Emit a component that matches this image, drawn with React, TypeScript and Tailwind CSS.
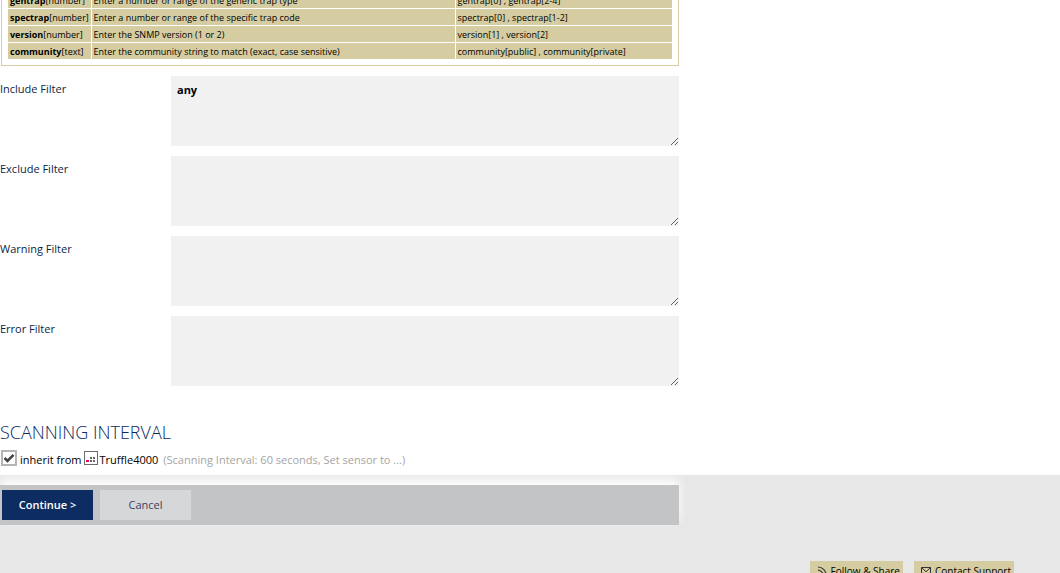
import { useState } from "react";

const trapRules = [
  {
    name: "gentrap",
    arg: "[number]",
    text: "Enter a number or range of the generic trap type",
    example: "gentrap[0] , gentrap[2-4]",
  },
  {
    name: "spectrap",
    arg: "[number]",
    text: "Enter a number or range of the specific trap code",
    example: "spectrap[0] , spectrap[1-2]",
  },
  {
    name: "version",
    arg: "[number]",
    text: "Enter the SNMP version (1 or 2)",
    example: "version[1] , version[2]",
  },
  {
    name: "community",
    arg: "[text]",
    text: "Enter the community string to match (exact, case sensitive)",
    example: "community[public] , community[private]",
  },
];

const filters = [
  { id: "include", label: "Include Filter", value: "any" },
  { id: "exclude", label: "Exclude Filter", value: "" },
  { id: "warning", label: "Warning Filter", value: "" },
  { id: "error", label: "Error Filter", value: "" },
];

function DeviceIcon() {
  return (
    <svg width="14" height="14" viewBox="0 0 14 14" shapeRendering="crispEdges">
      <rect x="0.5" y="0.5" width="13" height="13" fill="#fff" stroke="#6b6b70" />
      <path d="M2 9h3v2H2z" fill="#e6005c" />
      <path d="M6 6h2v2H6zM9 6h2v2H9zM6 9h2v2H6zM9 9h2v2H9z" fill="#66666b" />
    </svg>
  );
}

function FeedIcon() {
  return (
    <svg width="10" height="10" viewBox="0 0 10 10" fill="none" stroke="#333" strokeWidth="1.2">
      <path d="M1 1a8 8 0 0 1 8 8M1 4.2A4.8 4.8 0 0 1 5.8 9" />
      <circle cx="2" cy="8" r="1" fill="#333" stroke="none" />
    </svg>
  );
}

function MailIcon() {
  return (
    <svg width="10" height="10" viewBox="0 0 10 10" fill="none" stroke="#333">
      <path d="M0.5 1.5h9v7h-9zM0.5 1.5L5 5.8l4.5-4.3" />
    </svg>
  );
}

function RuleTable() {
  return (
    <div className="-mt-2 ml-px border border-t-0 border-[#d5cda1] px-[6px] pb-[6px]">
      <table className="w-full table-fixed border-collapse text-left text-[9px] leading-[14px]">
        <colgroup>
          <col className="w-[83px]" />
          <col />
          <col className="w-[217px]" />
        </colgroup>
        <tbody>
          {trapRules.map((rule) => (
            <tr key={rule.name} className="border-b border-white bg-[#d5cda1] last:border-b-0">
              <th className="border-r border-white px-[2px] pt-[2px] pb-0 font-normal whitespace-nowrap">
                <b>{rule.name}</b>
                {rule.arg}
              </th>
              <td className="border-r border-white px-[2px] pt-[2px] pb-0">{rule.text}</td>
              <td className="px-[2px] pt-[2px] pb-0">{rule.example}</td>
            </tr>
          ))}
        </tbody>
      </table>
    </div>
  );
}

function FilterField({ id, label, value }: { id: string; label: string; value: string }) {
  return (
    <div className="flex">
      <label htmlFor={id} className="w-[171px] shrink-0 pt-[5px]">
        {label}
      </label>
      <textarea
        id={id}
        defaultValue={value}
        className="block h-[70px] min-w-0 flex-1 resize bg-[#f1f1f1] px-[6px] py-[6px] font-bold text-black outline-none"
      />
    </div>
  );
}

export default function App() {
  const [inherit, setInherit] = useState(true);

  return (
    <div className="flex h-screen flex-col overflow-hidden bg-white font-['Open_Sans','Noto_Sans',sans-serif] text-[11px] leading-4 text-black">
      <main className="w-full max-w-[679px] shrink-0">
        <RuleTable />

        <section className="mt-[10px] flex flex-col gap-[10px] text-[#0b1f45]">
          {filters.map((f) => (
            <FilterField key={f.id} id={f.id} label={f.label} value={f.value} />
          ))}
        </section>

        <section className="mt-[34px] pb-[5px]">
          <h2 className="text-[18px] leading-6 font-light text-[#0a2a5e]">SCANNING INTERVAL</h2>
          <div className="mt-[6px] flex items-center">
            <label className="flex h-5 items-center whitespace-nowrap">
              <span className="mr-[3px] ml-px grid size-4 place-items-center self-start border-2 border-[#b5b5b5] bg-white">
                <input
                  type="checkbox"
                  checked={inherit}
                  onChange={(e) => setInherit(e.target.checked)}
                  className="peer col-start-1 row-start-1 size-3 appearance-none"
                />
                <svg
                  viewBox="0 0 12 12"
                  className="pointer-events-none invisible col-start-1 row-start-1 size-3 peer-checked:visible"
                  fill="none"
                  stroke="#444"
                  strokeWidth="2.6"
                >
                  <path d="M1.5 6l3 3L10.5 2.8" />
                </svg>
              </span>
              inherit from
              <span className="mx-[2px] self-start pt-px">
                <DeviceIcon />
              </span>
              Truffle4000
            </label>
            <span className="ml-[5px] whitespace-nowrap text-[#a5a5a5]">
              (Scanning Interval: 60 seconds, Set sensor to ...)
            </span>
          </div>
        </section>
      </main>

      <div className="flex-1 overflow-hidden bg-[#e7e7e7] pt-[10px]">
        <div className="flex w-full max-w-[679px] gap-[7px] bg-[#c3c4c6] px-[2px] py-[5px] shadow-[0_-5px_10px_0_#fff]">
          <button type="button" className="h-[30px] w-[91px] bg-[#0d2d62] font-semibold text-white">
            Continue &gt;
          </button>
          <button type="button" className="h-[30px] w-[91px] bg-[#d6d7d9] text-[#3c4260]">
            Cancel
          </button>
        </div>

        <footer className="mt-9 mr-[46px] flex justify-end gap-[11px] text-[10px]">
          <a href="#share" className="flex h-5 items-center gap-1 bg-[#d5cda1] pr-[3px] pl-[7px]">
            <FeedIcon />
            Follow &amp; Share
          </a>
          <a href="#support" className="flex h-5 items-center gap-1 bg-[#d5cda1] pr-[3px] pl-[7px]">
            <MailIcon />
            Contact Support
          </a>
        </footer>
      </div>
    </div>
  );
}
